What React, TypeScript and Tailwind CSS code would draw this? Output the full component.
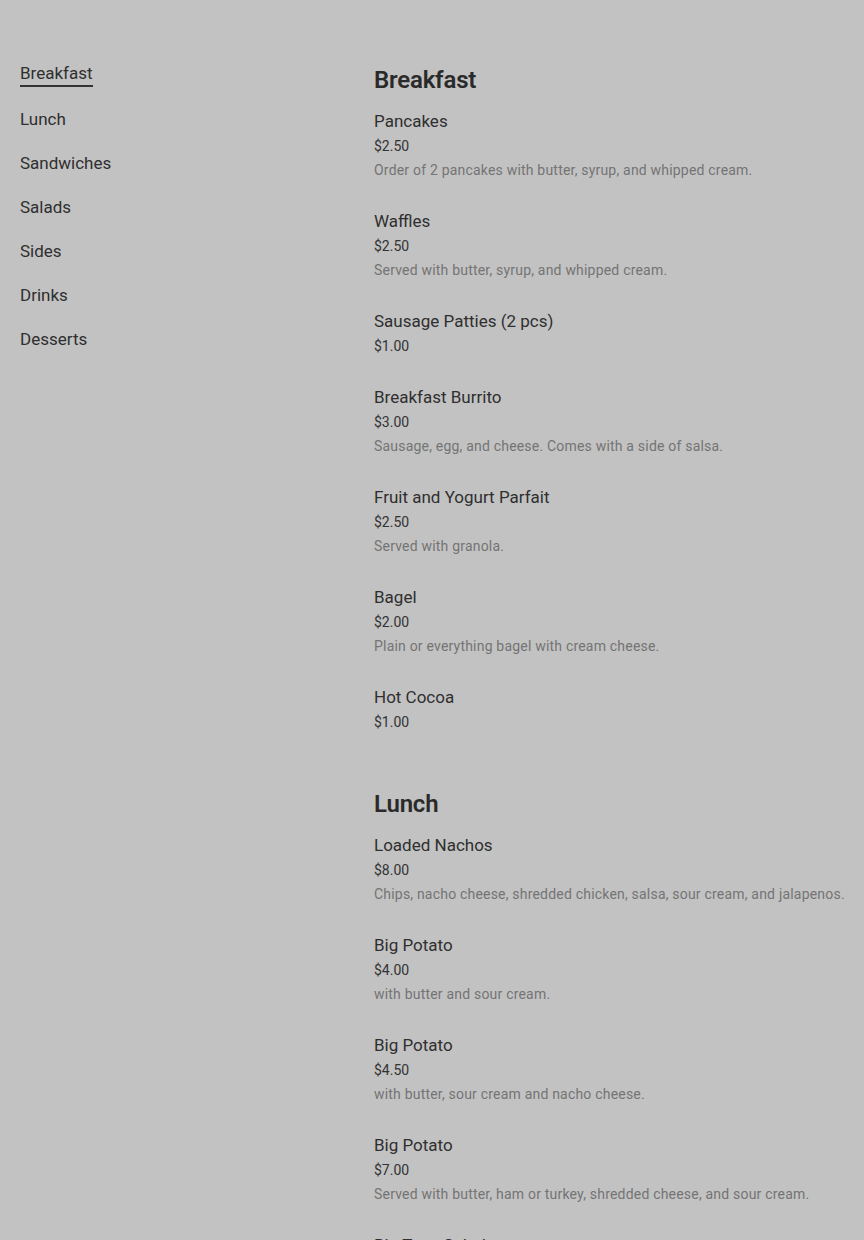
import React from "react";

type Item = { name: string; price: string; desc?: string };
type Section = { title: string; items: Item[] };

const sections: Section[] = [
  {
    title: "Breakfast",
    items: [
      { name: "Pancakes", price: "$2.50", desc: "Order of 2 pancakes with butter, syrup, and whipped cream." },
      { name: "Waffles", price: "$2.50", desc: "Served with butter, syrup, and whipped cream." },
      { name: "Sausage Patties (2 pcs)", price: "$1.00" },
      { name: "Breakfast Burrito", price: "$3.00", desc: "Sausage, egg, and cheese. Comes with a side of salsa." },
      { name: "Fruit and Yogurt Parfait", price: "$2.50", desc: "Served with granola." },
      { name: "Bagel", price: "$2.00", desc: "Plain or everything bagel with cream cheese." },
      { name: "Hot Cocoa", price: "$1.00" },
    ],
  },
  {
    title: "Lunch",
    items: [
      { name: "Loaded Nachos", price: "$8.00", desc: "Chips, nacho cheese, shredded chicken, salsa, sour cream, and jalapenos." },
      { name: "Big Potato", price: "$4.00", desc: "with butter and sour cream." },
      { name: "Big Potato", price: "$4.50", desc: "with butter, sour cream and nacho cheese." },
      { name: "Big Potato", price: "$7.00", desc: "Served with butter, ham or turkey, shredded cheese, and sour cream." },
      { name: "Big Taco Salad", price: "$6.00", desc: "Lettuce, beef, cheese, salsa, and sour cream." },
    ],
  },
];

const nav = ["Breakfast", "Lunch", "Sandwiches", "Salads", "Sides", "Drinks", "Desserts"];

export default function App() {
  return (
    <div
      className="h-[1240px] overflow-hidden bg-[#c2c2c2] text-[#2e2e2e]"
      style={{ fontFamily: "Roboto, 'Liberation Sans', sans-serif" }}
    >
      <div className="flex pt-[61px]">
        <nav className="w-[374px] shrink-0 pl-5">
          <ul className="flex flex-col gap-5">
            {nav.map((n, i) => (
              <li key={n} className="flex">
                <span
                  className={
                    "text-[17px] leading-6 font-normal text-[#2f2f2f] " +
                    (i === 0 ? "border-b-2 border-[#333]" : "")
                  }
                >
                  {n}
                </span>
              </li>
            ))}
          </ul>
        </nav>
        <main className="flex-1 pt-[3px]">
          {sections.map((s) => (
            <section key={s.title} className="mb-[54px]">
              <h2 className="text-[24px] leading-8 font-semibold text-[#2a2a2a] mb-[13px] tracking-[-0.2px]">
                {s.title}
              </h2>
              {s.items.map((it, idx) => (
                <div key={idx} className="mb-[27px]">
                  <div className="text-[17px] leading-6 font-normal text-[#2f2f2f]">{it.name}</div>
                  <div className="pt-px text-[14px] leading-6 text-[#333]">{it.price}</div>
                  {it.desc && (
                    <div className="text-[14px] leading-6 text-[#747474] tracking-[0.2px]">{it.desc}</div>
                  )}
                </div>
              ))}
            </section>
          ))}
        </main>
      </div>
    </div>
  );
}
